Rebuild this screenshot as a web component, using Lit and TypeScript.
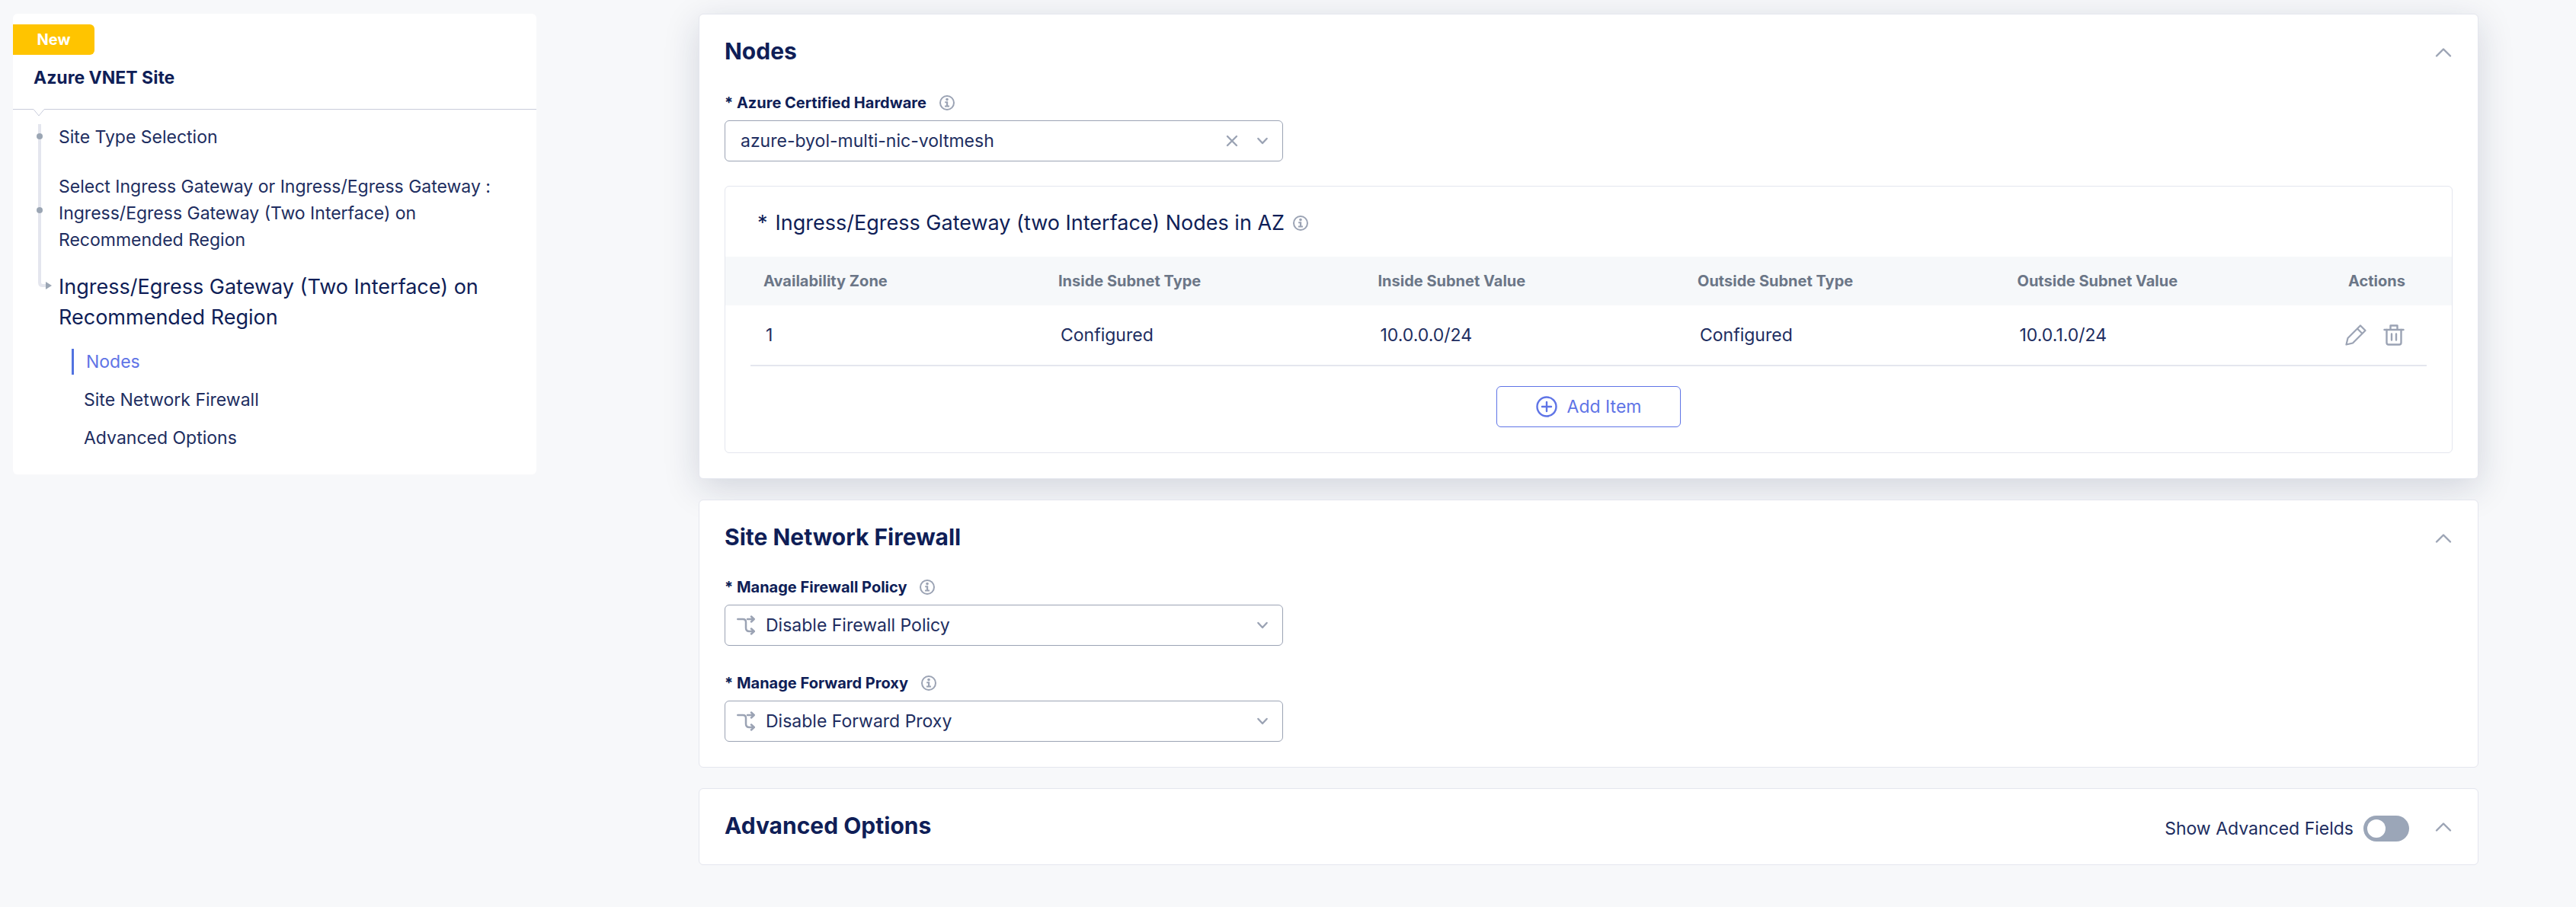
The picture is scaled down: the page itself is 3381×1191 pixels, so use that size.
import { LitElement, html, css } from "lit";
import { customElement, property, state } from "lit/decorators.js";

const infoIcon = html`<svg class="info" viewBox="0 0 20 20" width="20" height="20" aria-hidden="true">
  <circle cx="10" cy="10" r="9" fill="none" stroke="currentColor" stroke-width="2"></circle>
  <circle cx="10" cy="5.6" r="1.8" fill="currentColor"></circle>
  <path d="M7.200 8.200h4v5.200h1.800v2H7v-2h2V10.200H7.200z" fill="currentColor"></path>
</svg>`;

const branchIcon = html`<svg class="branch" viewBox="0 0 24 26" width="24" height="26" aria-hidden="true">
  <g fill="none" stroke="currentColor" stroke-width="2.500" stroke-linecap="round" stroke-linejoin="round">
    <path d="M1.300 5H8q4 0 4 4v7.500q0 4.500 4.500 4.500H22.500"></path>
    <path d="M14 5h8.500M19 1.500 22.700 5 19 8.500M19 17.500 22.700 21 19 24.500"></path>
  </g>
</svg>`;

const chevron = (dir: "up" | "down") => html`<svg
  class="chevron"
  viewBox="0 0 24 24"
  width=${dir === "up" ? 24 : 18}
  height=${dir === "up" ? 24 : 18}
  aria-hidden="true"
>
  <path
    d=${dir === "up" ? "M3 16.500 12 7.500l9 9" : "M4.500 8 12 16l7.500-8"}
    fill="none"
    stroke="currentColor"
    stroke-width=${dir === "up" ? 2.4 : 3.2}
    stroke-linecap="round"
    stroke-linejoin="round"
  ></path>
</svg>`;

const base = css`
  * {
    box-sizing: border-box;
  }
  button {
    font: inherit;
    color: inherit;
    background: none;
    border: 0;
    padding: 0;
    cursor: pointer;
  }
  svg {
    display: block;
    flex: none;
  }
  h1,
  h2 {
    color: #0f1e57;
  }
`;

@customElement("site-nav")
class SiteNav extends LitElement {
  static styles = [
    base,
    css`
      :host {
        display: block;
        background: #fff;
        border-radius: 6px;
        padding: 14px 0 31px;
      }
      .badge {
        display: flex;
        align-items: center;
        justify-content: center;
        width: 107px;
        height: 40px;
        background: #ffc400;
        color: #fff;
        font-weight: 700;
        font-size: 20px;
        border-radius: 0 6px 6px 0;
      }
      h2 {
        margin: 0;
        padding: 12px 27px 23px;
        font-size: 23px;
        line-height: 36px;
        font-weight: 700;
      }
      .notch {
        display: flex;
        height: 12px;
      }
      .notch i {
        border-top: 1px solid #c9ccdb;
        height: 0;
      }
      .notch .before {
        width: 27px;
      }
      .notch .after {
        flex: 1;
      }
      ol,
      ul {
        list-style: none;
        margin: 0;
        padding: 0;
      }
      .steps {
        padding-top: 8px;
      }
      .step {
        display: grid;
        grid-template-columns: 60px minmax(0, 1fr);
      }
      .rail {
        display: flex;
        flex-direction: column;
        align-items: center;
        width: 8px;
        margin-left: 31px;
      }
      .line {
        width: 4px;
        flex: 1;
        background: #e4e6ee;
      }
      .first .lead {
        flex: none;
        height: 12px;
      }
      .second .lead {
        flex: none;
        height: 44px;
      }
      .dot {
        width: 8px;
        height: 8px;
        border-radius: 50%;
        background: #9ba6b4;
      }
      a {
        color: inherit;
        text-decoration: none;
      }
      .text {
        font-size: 23px;
        line-height: 35px;
        padding-right: 40px;
      }
      .first .text {
        padding-bottom: 30px;
      }
      .second .text {
        padding-bottom: 24px;
      }
      .current .text {
        color: #0f1e57;
        font-size: 27px;
        line-height: 40px;
      }
      .sub {
        padding: 21px 0 0 77px;
        font-size: 23px;
      }
      .sub a {
        display: flex;
        align-items: center;
        height: 34px;
        padding-left: 16px;
      }
      .sub li + li {
        margin-top: 16px;
      }
      .sub .active {
        color: #5f74e6;
        border-left: 3px solid #5273e0;
      }
    `,
  ];
  render() {
    return html`
      <div class="badge">New</div>
      <h2>Azure VNET Site</h2>
      <div class="notch">
        <i class="before"></i>
        <svg viewBox="0 0 14 12" width="14" height="12"><path d="M0 .5 7 9 14 .5" fill="none" stroke="#c9ccdb"></path></svg>
        <i class="after"></i>
      </div>
      <ol class="steps">
        <li class="step first">
          <span class="rail"><i class="line lead"></i><i class="dot"></i><i class="line"></i></span>
          <a class="text" href="#type">Site Type Selection</a>
        </li>
        <li class="step second">
          <span class="rail"><i class="line lead"></i><i class="dot"></i><i class="line"></i></span>
          <a class="text" href="#gateway"
            >Select Ingress Gateway or Ingress/Egress Gateway :<br />Ingress/Egress Gateway (Two Interface) on
            Recommended Region</a
          >
        </li>
        <li class="step current">
          <svg viewBox="0 0 60 40" width="60" height="40" aria-hidden="true">
            <path d="M35 0v14q0 4 4 4h5" fill="none" stroke="#e4e6ee" stroke-width="4"></path>
            <path d="M43 13v10l8-5z" fill="#9ba6b4"></path>
          </svg>
          <a class="text" href="#region">Ingress/Egress Gateway (Two Interface) on Recommended Region</a>
        </li>
      </ol>
      <ul class="sub">
        <li><a class="active" href="#nodes">Nodes</a></li>
        <li><a href="#firewall">Site Network Firewall</a></li>
        <li><a href="#advanced">Advanced Options</a></li>
      </ul>
    `;
  }
}

@customElement("form-card")
class FormCard extends LitElement {
  @property() heading = "";
  @property({ type: Boolean, reflect: true }) raised = false;
  static styles = [
    base,
    css`
      :host {
        display: block;
        background: #fff;
        border: 1px solid #e4e6ee;
        border-radius: 6px;
        padding: 25px 33px 33px;
      }
      :host([raised]) {
        box-shadow: 0 12px 48px rgba(20, 30, 70, 0.16);
      }
      header {
        display: flex;
        align-items: center;
        justify-content: space-between;
        height: 50px;
      }
      h1 {
        margin: 0;
        padding-bottom: 4px;
        font-size: 30px;
        line-height: 44px;
        font-weight: 700;
      }
      .tools {
        display: flex;
        align-items: center;
        gap: 33px;
      }
      .toggle {
        color: #9ba3b4;
      }
    `,
  ];
  render() {
    return html`
      <header>
        <h1>${this.heading}</h1>
        <div class="tools">
          <slot name="tools"></slot>
          <button class="toggle" aria-label="Collapse ${this.heading}">${chevron("up")}</button>
        </div>
      </header>
      <slot></slot>
    `;
  }
}

@customElement("select-field")
class SelectField extends LitElement {
  @property() label = "";
  @property() value = "";
  @property({ type: Boolean }) clearable = false;
  @property({ type: Boolean }) branch = false;
  static styles = [
    base,
    css`
      :host {
        display: block;
        width: 733px;
        max-width: 100%;
      }
      .label {
        display: flex;
        align-items: center;
        gap: 17px;
        color: #0f1e57;
        font-size: 20px;
        line-height: 30px;
        font-weight: 700;
      }
      .info,
      .branch,
      .clear,
      .chevron {
        color: #9ba3b4;
      }
      .box {
        display: flex;
        align-items: center;
        height: 54px;
        margin-top: 8px;
        padding: 0 17px 0 15px;
        border: 1px solid #9ba3b4;
        border-radius: 6px;
      }
      .box:focus-within {
        border-color: #5273e0;
      }
      select {
        flex: 1;
        min-width: 0;
        height: 100%;
        appearance: none;
        border: 0;
        outline: 0;
        background: none;
        padding: 0 5px;
        font: inherit;
        font-size: 23px;
        color: inherit;
      }
      .branch + select {
        padding-left: 14px;
      }
      .clear {
        margin-right: 23px;
      }
    `,
  ];
  render() {
    return html`
      <div class="label"><label for="choice">* ${this.label}</label>${infoIcon}</div>
      <div class="box">
        ${this.branch ? branchIcon : ""}
        <select id="choice">
          <option>${this.value}</option>
        </select>
        ${this.clearable
          ? html`<button class="clear" aria-label="Clear">
              <svg viewBox="0 0 16 16" width="16" height="16">
                <path d="M2 2l12 12M14 2 2 14" stroke="currentColor" stroke-width="2.400" stroke-linecap="round"></path>
              </svg>
            </button>`
          : ""}
        ${chevron("down")}
      </div>
    `;
  }
}

interface NodeRow {
  zone: string;
  insideType: string;
  insideValue: string;
  outsideType: string;
  outsideValue: string;
}

@customElement("node-table")
class NodeTable extends LitElement {
  @state() private rows: NodeRow[] = [
    {
      zone: "1",
      insideType: "Configured",
      insideValue: "10.0.0.0/24",
      outsideType: "Configured",
      outsideValue: "10.0.1.0/24",
    },
  ];
  static styles = [
    base,
    css`
      :host {
        display: block;
        border: 1px solid #e4e6ee;
        border-radius: 6px;
      }
      .title {
        display: flex;
        align-items: center;
        gap: 11px;
        padding: 28px 42px 24px;
      }
      h2 {
        margin: 0;
        display: flex;
        gap: 10px;
        font-size: 27px;
        line-height: 40px;
        font-weight: 400;
      }
      .info {
        color: #9ba3b4;
      }
      table {
        width: 100%;
        border-collapse: collapse;
        table-layout: fixed;
      }
      th,
      td {
        text-align: left;
        padding: 0;
      }
      th {
        height: 64px;
        background: #f6f8fa;
        color: #6b7687;
        font-size: 20px;
        font-weight: 700;
      }
      td {
        height: 79px;
        padding-left: 3px;
        font-size: 23px;
      }
      .edge {
        width: 33px;
      }
      .zone {
        width: 404px;
      }
      .act {
        width: 118px;
      }
      th.zone {
        padding-left: 17px;
      }
      td.zone {
        padding-left: 20px;
      }
      th.act {
        padding-left: 15px;
      }
      tbody .line {
        border-bottom: 2px solid #e4e6ee;
      }
      .icons {
        display: flex;
        gap: 22px;
        color: #9ba3b4;
        padding-left: 8px;
      }
      .icons svg {
        width: 28px;
        height: 28px;
      }
      .foot {
        display: flex;
        justify-content: center;
        padding: 26px 0 33px;
      }
      .add {
        display: flex;
        align-items: center;
        justify-content: center;
        gap: 13px;
        width: 242px;
        height: 54px;
        border: 1px solid #5f74e6;
        border-radius: 6px;
        color: #5f74e6;
        font-size: 23px;
      }
    `,
  ];
  render() {
    return html`
      <div class="title">
        <h2><span>*</span><span>Ingress/Egress Gateway (two Interface) Nodes in AZ</span></h2>
        ${infoIcon}
      </div>
      <table>
        <thead>
          <tr>
            <th class="edge"></th>
            <th class="zone">Availability Zone</th>
            <th>Inside Subnet Type</th>
            <th>Inside Subnet Value</th>
            <th>Outside Subnet Type</th>
            <th>Outside Subnet Value</th>
            <th class="act">Actions</th>
            <th class="edge"></th>
          </tr>
        </thead>
        <tbody>
          ${this.rows.map(
            (r) => html`<tr>
              <td class="edge"></td>
              <td class="zone line">${r.zone}</td>
              <td class="line">${r.insideType}</td>
              <td class="line">${r.insideValue}</td>
              <td class="line">${r.outsideType}</td>
              <td class="line">${r.outsideValue}</td>
              <td class="line">
                <div class="icons">
                  <button aria-label="Edit">
                    <svg viewBox="0 0 28 28">
                      <g fill="none" stroke="currentColor" stroke-width="2.200" stroke-linejoin="round">
                        <path d="M1.500 26.500 3.500 18 20 1.500 26.500 8 10 24.500z"></path>
                        <path d="M16 5.500l6.500 6.500"></path>
                      </g>
                    </svg>
                  </button>
                  <button aria-label="Delete">
                    <svg viewBox="0 0 28 28">
                      <g fill="none" stroke="currentColor" stroke-width="2.400" stroke-linejoin="round" stroke-linecap="round">
                        <path d="M1.500 7h25M9.500 7V1.500h9V7"></path>
                        <path d="M4.500 7v17q0 2.500 2.500 2.500h14q2.500 0 2.500-2.500V7"></path>
                        <path d="M11 12.500v8M17 12.500v8"></path>
                      </g>
                    </svg>
                  </button>
                </div>
              </td>
              <td class="edge"></td>
            </tr>`,
          )}
        </tbody>
      </table>
      <div class="foot">
        <button class="add">
          <svg viewBox="0 0 28 28" width="28" height="28" aria-hidden="true">
            <g fill="none" stroke="currentColor" stroke-width="2.400" stroke-linecap="round">
              <circle cx="14" cy="14" r="12.500"></circle>
              <path d="M14 8v12M8 14h12"></path>
            </g>
          </svg>
          Add Item
        </button>
      </div>
    `;
  }
}

@customElement("app-root")
class AppRoot extends LitElement {
  @state() private advanced = false;
  static styles = [
    base,
    css`
      :host {
        box-sizing: border-box;
        display: grid;
        grid-template-columns: minmax(0, 687fr) minmax(0, 2336fr);
        column-gap: 213px;
        align-items: start;
        min-height: 100vh;
        padding: 18px 128px 50px 17px;
        background: #f7f8fa;
        color: #202d60;
        font-family: Inter, "Liberation Sans", sans-serif;
      }
      main {
        display: grid;
        gap: 27px;
      }
      .nodes-field {
        margin: 26px 0 32px;
      }
      .policy {
        margin-top: 24px;
      }
      .proxy {
        margin-top: 34px;
      }
      .compact {
        padding-bottom: 24px;
      }
      .switch {
        display: flex;
        align-items: center;
        gap: 13px;
        padding-top: 4px;
        font-size: 23px;
      }
      .switch input {
        appearance: none;
        margin: 0;
        width: 60px;
        height: 34px;
        padding: 5px;
        border-radius: 17px;
        background: #9ba6b8;
        display: flex;
      }
      .switch input::before {
        content: "";
        width: 24px;
        height: 24px;
        border-radius: 50%;
        background: #fff;
      }
      .switch input:checked {
        background: #5273e0;
        justify-content: flex-end;
      }
    `,
  ];
  render() {
    return html`
      <site-nav></site-nav>
      <main>
        <form-card id="nodes" heading="Nodes" raised>
          <select-field
            class="nodes-field"
            label="Azure Certified Hardware"
            value="azure-byol-multi-nic-voltmesh"
            clearable
          ></select-field>
          <node-table></node-table>
        </form-card>
        <form-card id="firewall" heading="Site Network Firewall">
          <select-field class="policy" label="Manage Firewall Policy" value="Disable Firewall Policy" branch></select-field>
          <select-field class="proxy" label="Manage Forward Proxy" value="Disable Forward Proxy" branch></select-field>
        </form-card>
        <form-card id="advanced" class="compact" heading="Advanced Options">
          <label class="switch" slot="tools"
            >Show Advanced Fields
            <input
              type="checkbox"
              role="switch"
              .checked=${this.advanced}
              @change=${(e: Event) => (this.advanced = (e.target as HTMLInputElement).checked)}
            />
          </label>
        </form-card>
      </main>
    `;
  }
}
